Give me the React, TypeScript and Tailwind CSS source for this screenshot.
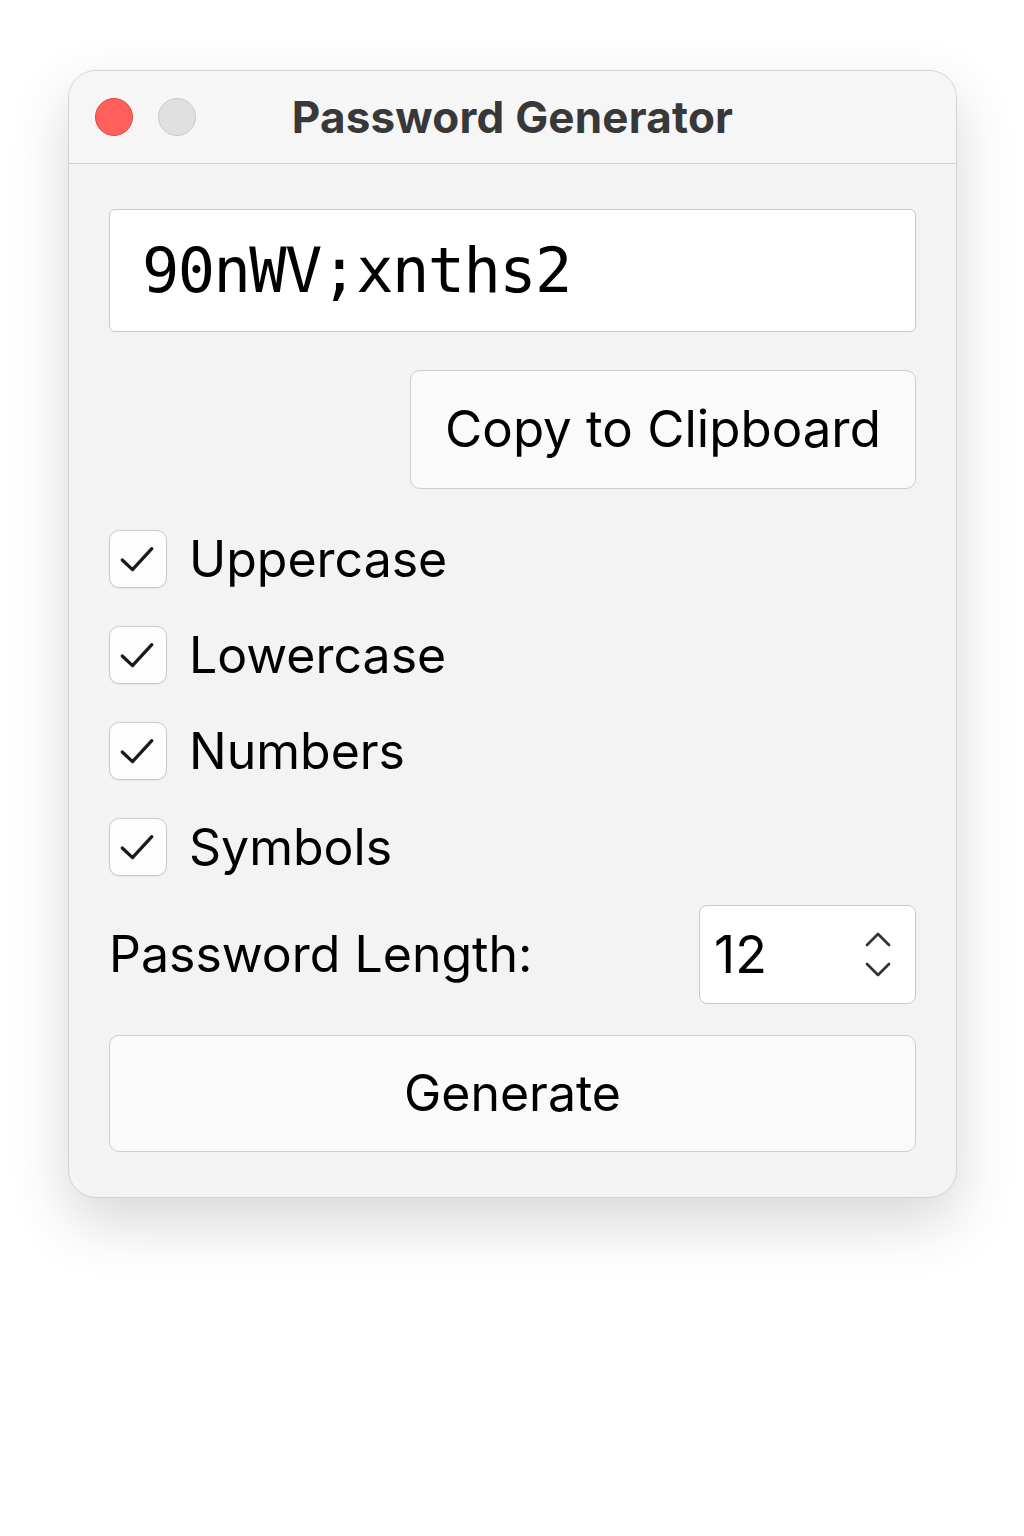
import React, { useState } from "react";

const sans = "font-['Inter','Noto_Sans',sans-serif]";

function CheckRow({ label, checked, onToggle }: { label: string; checked: boolean; onToggle: () => void }) {
  return (
    <button type="button" onClick={onToggle} className="flex items-center gap-[22px] text-left">
      <span className="flex h-[58px] w-[58px] items-center justify-center rounded-[10px] border border-[#cacaca] bg-[#fdfdfd] shadow-[0_1px_1px_rgba(0,0,0,0.05)]">
        {checked && (
          <svg width="58" height="58" viewBox="0 0 58 58" fill="none">
            <path d="M12.7 30 L23.3 40 L43.3 18.3" stroke="#1a1a1a" strokeWidth="3.4" strokeLinecap="round" strokeLinejoin="round" />
          </svg>
        )}
      </span>
      <span className={`${sans} text-[50px] leading-none text-black`}>{label}</span>
    </button>
  );
}

export default function App() {
  const [opts, setOpts] = useState({ Uppercase: true, Lowercase: true, Numbers: true, Symbols: true });
  const [length] = useState(12);

  return (
    <div className="min-h-[1536px] w-[1024px] bg-white pl-[68px] pt-[70px]">
      <div className="w-[889px] overflow-hidden rounded-[28px] border border-[#d2d2d2] bg-[#f3f3f3] shadow-[0_24px_60px_rgba(0,0,0,0.16)]">
        {/* title bar */}
        <div className="relative flex h-[93px] items-center border-b border-[#cfcfcf] bg-[#f6f6f6] px-[26px]">
          <div className="flex items-center gap-[25px]">
            <span className="h-[38px] w-[38px] rounded-full border border-[#e5433d] bg-[#ff605c]" />
            <span className="h-[38px] w-[38px] rounded-full border border-[#c8c8c8] bg-[#e0e0e0]" />
          </div>
          <div className={`${sans} absolute inset-0 flex items-center justify-center text-[44px] font-bold tracking-[0.2px] text-[#383838]`}>
            Password Generator
          </div>
        </div>

        {/* body */}
        <div className="flex flex-col px-[40px] pb-[45px] pt-[45px]">
          <div className="flex h-[123px] items-center rounded-[6px] border border-[#c9c9c9] bg-white px-[32px]">
            <span className="font-['DejaVu_Sans_Mono',monospace] text-[62px] leading-none tracking-[-1.6px] text-black">90nWV;xnths2</span>
          </div>

          <div className="mt-[38px] flex justify-end">
            <button type="button" className={`${sans} flex h-[119px] w-[506px] items-center justify-center rounded-[10px] border border-[#cdcdcd] bg-[#fafafa] text-[51px] text-black`}>
              Copy to Clipboard
            </button>
          </div>

          <div className="mt-[41px] flex flex-col gap-[38px]">
            {(Object.keys(opts) as (keyof typeof opts)[]).map((k) => (
              <CheckRow key={k} label={k} checked={opts[k]} onToggle={() => setOpts({ ...opts, [k]: !opts[k] })} />
            ))}
          </div>

          <div className="mt-[29px] flex items-center justify-between">
            <span className={`${sans} text-[50px] text-black`}>Password Length:</span>
            <div className="flex h-[99px] w-[217px] items-center justify-between rounded-[8px] border border-[#c9c9c9] bg-white pl-[14px] pr-[24px]">
              <span className={`${sans} text-[52px] leading-none text-black`}>{length}</span>
              <svg width="26" height="46" viewBox="0 0 26 46" fill="none">
                <path d="M2 13 L13 2 L24 13" stroke="#333" strokeWidth="2.8" strokeLinecap="round" strokeLinejoin="round" />
                <path d="M2 32 L13 43 L24 32" stroke="#333" strokeWidth="2.8" strokeLinecap="round" strokeLinejoin="round" />
              </svg>
            </div>
          </div>

          <button type="button" className={`${sans} mt-[31px] flex h-[117px] items-center justify-center rounded-[10px] border border-[#cdcdcd] bg-[#fafafa] text-[50px] text-black`}>
            Generate
          </button>
        </div>
      </div>
    </div>
  );
}
